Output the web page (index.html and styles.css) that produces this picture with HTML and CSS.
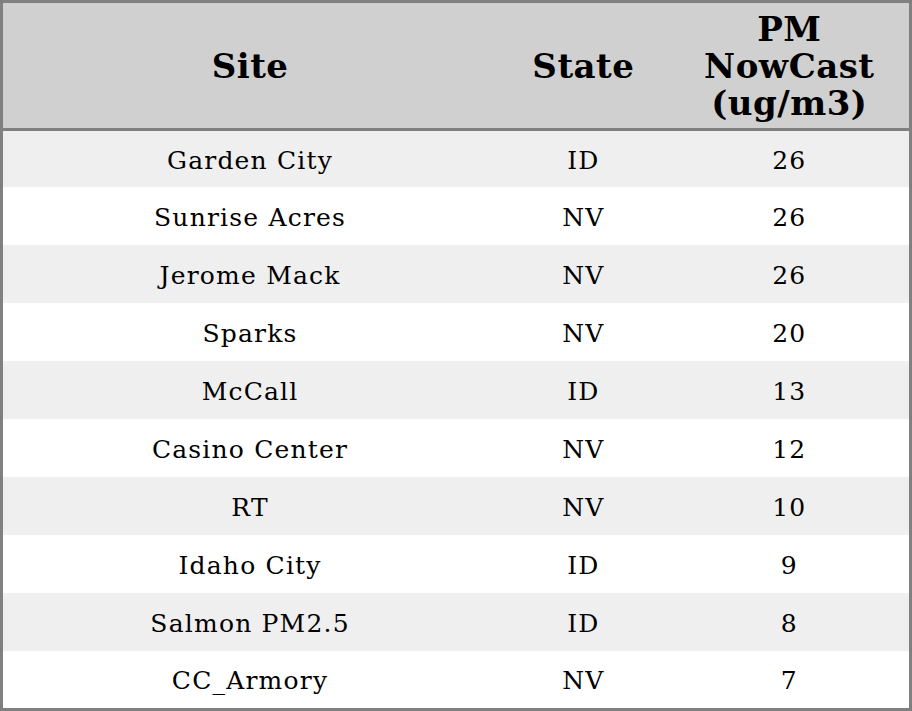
FILE: index.html
```html
<!DOCTYPE html>
<html>
<head>
<meta charset="utf-8">
<link rel="stylesheet" href="styles.css">
</head>
<body>
<table class="grid">
  <colgroup>
    <col class="c-site">
    <col class="c-state">
    <col class="c-pm">
  </colgroup>
  <thead>
    <tr><th>Site</th><th>State</th><th>PM<br>NowCast<br>(ug/m3)</th></tr>
  </thead>
  <tbody>
    <tr><td>Garden City</td><td>ID</td><td>26</td></tr>
    <tr><td>Sunrise Acres</td><td>NV</td><td>26</td></tr>
    <tr><td>Jerome Mack</td><td>NV</td><td>26</td></tr>
    <tr><td>Sparks</td><td>NV</td><td>20</td></tr>
    <tr><td>McCall</td><td>ID</td><td>13</td></tr>
    <tr><td>Casino Center</td><td>NV</td><td>12</td></tr>
    <tr><td>RT</td><td>NV</td><td>10</td></tr>
    <tr><td>Idaho City</td><td>ID</td><td>9</td></tr>
    <tr><td>Salmon PM2.5</td><td>ID</td><td>8</td></tr>
    <tr><td>CC_Armory</td><td>NV</td><td>7</td></tr>
  </tbody>
</table>
</body>
</html>
```
FILE: styles.css
```css
html, body {
  margin: 0;
  padding: 0;
  background: #ffffff;
}
.grid {
  width: 912px;
  border-collapse: collapse;
  border: 3px solid #808080;
  font-family: "DejaVu Serif", serif;
  color: #000;
  table-layout: fixed;
}
.c-site { width: 494px; }
.c-state { width: 172px; }
.c-pm { width: 240px; }
.grid th {
  background: #d0d0d0;
  font-size: 34px;
  font-weight: bold;
  letter-spacing: 0.5px;
  line-height: 37px;
  height: 123px;
  padding: 2px 0 0;
  text-align: center;
  vertical-align: middle;
  border-bottom: 3px solid #808080;
}
.grid td {
  font-size: 25px;
  letter-spacing: 1.2px;
  height: 56px;
  padding: 2px 0 0;
  text-align: center;
  vertical-align: middle;
}
.grid tbody tr:nth-child(odd) td {
  background: #efefef;
}
.grid tbody tr:first-child td { height: 54px; }
.grid tbody tr:last-child td { height: 55px; }
```
